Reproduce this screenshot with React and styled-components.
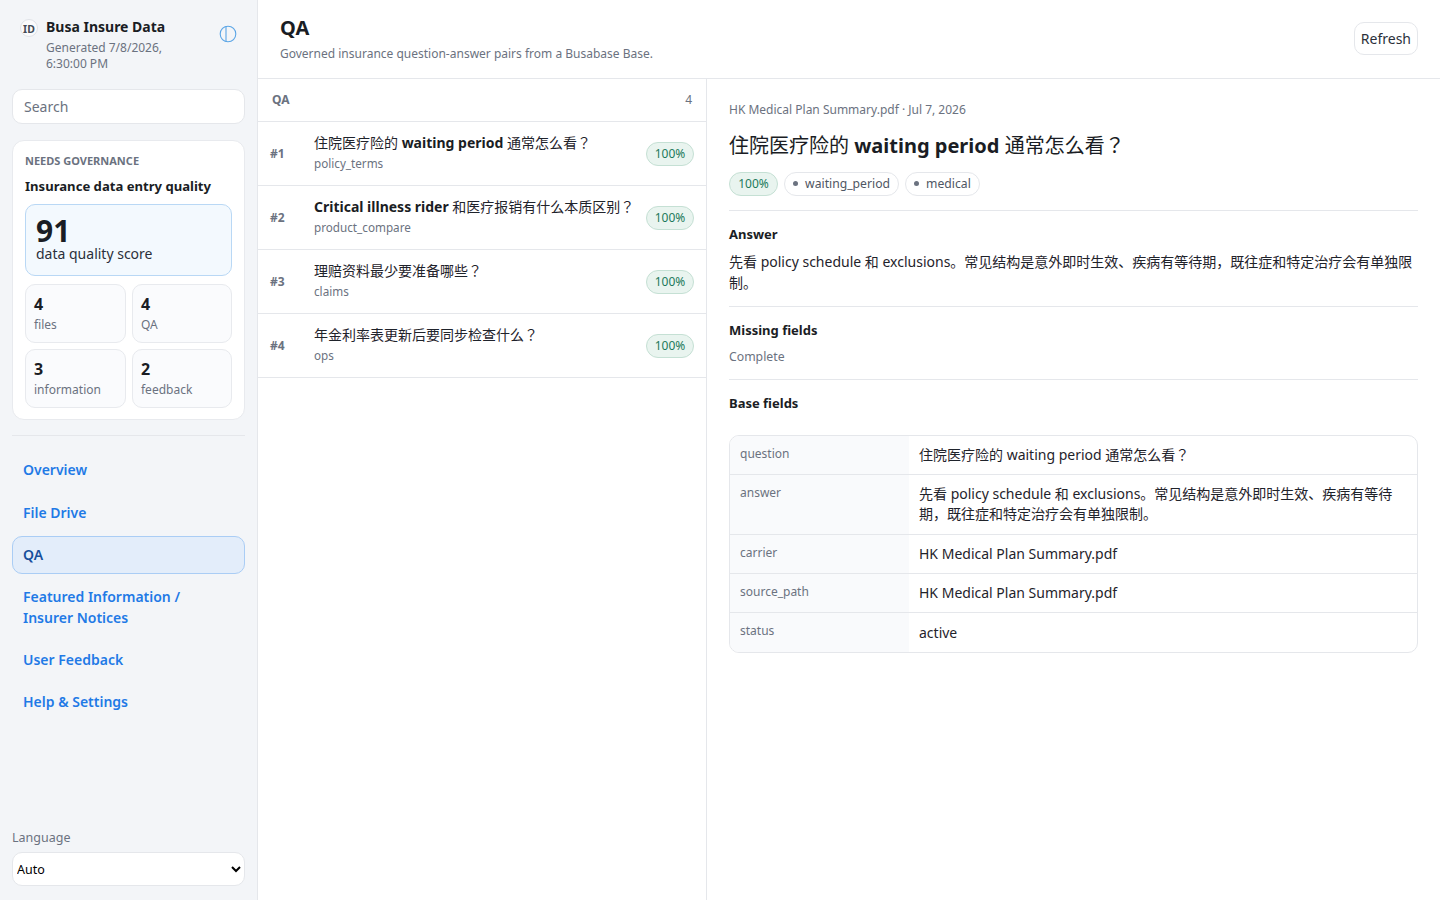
import React from 'react';
import styled, { createGlobalStyle } from 'styled-components';

const FONT = '"Noto Sans", "Noto Sans CJK JP", sans-serif';

const Global = createGlobalStyle`
  * { box-sizing: border-box; }
  html, body { margin: 0; height: 100%; }
  body {
    font-family: ${FONT};
    color: #1a1d24;
    background: #fff;
    overflow: hidden;
  }
`;

const Shell = styled.div`
  display: grid;
  grid-template-columns: 258px 1fr;
  height: 900px;
`;

const Sidebar = styled.aside`
  display: flex;
  flex-direction: column;
  background: #f3f5f8;
  border-right: 1px solid #e5e7eb;
  padding: 17px 12px 14px;
`;

const Brand = styled.div`
  display: flex;
  align-items: flex-start;
  padding: 0 8px 0 8px;
  height: 72px;
`;

const BrandBadge = styled.div`
  flex: none;
  width: 18px;
  height: 18px;
  margin-top: 2px;
  padding-top: 1px;
  border-radius: 50%;
  border: 1px solid #e0e3e8;
  background: #fbfbfc;
  display: flex;
  align-items: center;
  justify-content: center;
  font-size: 10.5px;
  font-weight: 700;
  color: #444b57;
`;

const BrandText = styled.div`
  flex: 1;
  margin-left: 8px;
`;

const BrandName = styled.div`
  font-size: 14px;
  font-weight: 700;
  line-height: 20px;
`;

const BrandMeta = styled.div`
  width: 130px;
  margin-top: 3px;
  font-size: 12px;
  line-height: 16px;
  color: #6b7280;
`;

const PanelToggle = styled.div`
  flex: none;
  margin: 8px 0 0 0;
  display: flex;
  color: #5aa5e6;
`;

const Search = styled.input`
  width: 100%;
  height: 35px;
  flex: none;
  border: 1px solid #e5e7eb;
  border-radius: 10px;
  background: #fff;
  padding: 0 11px;
  font: 400 14px ${FONT};
  outline: none;
  &::placeholder { color: #6b7280; opacity: 1; }
`;

const GovCard = styled.section`
  flex: none;
  margin-top: 16px;
  height: 280px;
  padding: 12px;
  background: #fff;
  border: 1px solid #e8eaee;
  border-radius: 12px;
`;

const GovEyebrow = styled.div`
  font-size: 11px;
  font-weight: 700;
  line-height: 16px;
  color: #6b7280;
`;

const GovTitle = styled.div`
  margin-top: 8px;
  font-size: 13.1px;
  font-weight: 700;
  line-height: 18px;
`;

const ScoreBox = styled.div`
  margin-top: 9px;
  height: 72px;
  padding: 12px 10px 0;
  border: 1px solid #b9d8f5;
  border-radius: 10px;
  background: #f3f9fe;
`;

const ScoreValue = styled.div`
  font-size: 30px;
  font-weight: 700;
  line-height: 28px;
`;

const ScoreLabel = styled.div`
  font-size: 14px;
  line-height: 18px;
  color: #2b303a;
`;

const StatGrid = styled.div`
  margin-top: 8px;
  display: grid;
  grid-template-columns: 100.8px 1fr;
  grid-auto-rows: 58.5px;
  gap: 6.5px 6.2px;
`;

const StatBox = styled.div`
  padding: 8px;
  border: 1px solid #e8eaee;
  border-radius: 10px;
  background: #fafbfd;
`;

const StatValue = styled.div`
  font-size: 16px;
  font-weight: 700;
  line-height: 22px;
`;

const StatLabel = styled.div`
  margin-top: 1px;
  font-size: 12px;
  line-height: 18px;
  color: #6b7280;
`;

const Divider = styled.hr`
  flex: none;
  width: 100%;
  margin: 15px 0 15.2px;
  border: 0;
  border-top: 1px solid #e5e7eb;
`;

const Nav = styled.nav`
  display: flex;
  flex-direction: column;
  gap: 4px;
`;

const NavItem = styled.a`
  display: block;
  padding: 7.2px 40px 8px 10px;
  border: 1px solid ${p => (p.$active ? '#aacdf5' : 'transparent')};
  border-radius: 10px;
  background: ${p => (p.$active ? '#e3edfa' : 'transparent')};
  color: ${p => (p.$active ? '#174f9c' : '#1f7ae6')};
  font-size: 14px;
  font-weight: 600;
  line-height: 21px;
`;

const LangBlock = styled.div`
  margin-top: auto;
`;

const LangLabel = styled.label`
  display: block;
  font-size: 12.5px;
  line-height: 18px;
  color: #6b7280;
  margin-bottom: 5px;
`;

const LangSelect = styled.select`
  width: 100%;
  height: 34px;
  border: 1px solid #e5e7eb;
  border-radius: 10px;
  background: #fff;
  padding: 0;
  font: 400 12.5px ${FONT};
  color: #000;
`;

const Main = styled.main`
  display: flex;
  flex-direction: column;
  min-width: 0;
`;

const Header = styled.header`
  flex: none;
  height: 79px;
  display: flex;
  align-items: flex-start;
  justify-content: space-between;
  padding: 14px 22px;
  border-bottom: 1px solid #e5e7eb;
`;

const PageTitle = styled.h1`
  margin: 0;
  font-size: 20px;
  font-weight: 700;
  line-height: 28px;
`;

const PageSub = styled.p`
  margin: 3px 0 0;
  font-size: 12px;
  line-height: 18px;
  color: #6b7280;
`;

const RefreshButton = styled.button`
  margin-top: 8px;
  height: 33px;
  padding: 0 6px;
  border: 1px solid #e5e7eb;
  border-radius: 10px;
  background: #fff;
  font: 400 14px ${FONT};
  color: #2b303a;
`;

const Columns = styled.div`
  flex: 1;
  display: grid;
  grid-template-columns: 449px 1fr;
  min-height: 0;
`;

const ListPane = styled.div`
  border-right: 1px solid #e5e7eb;
`;

const ListHead = styled.div`
  height: 43px;
  display: flex;
  align-items: center;
  justify-content: space-between;
  padding: 0 14px 1px;
  border-bottom: 1px solid #e5e7eb;
  font-size: 12px;
  color: #6b7280;
`;

const ListHeadTitle = styled.span`
  font-weight: 700;
`;

const QaRow = styled.div`
  height: 64px;
  display: flex;
  align-items: center;
  padding: 0 12px;
  border-bottom: 1px solid #e5e7eb;
`;

const QaIndex = styled.div`
  flex: none;
  width: 44px;
  font-size: 12px;
  font-weight: 700;
  color: #6b7280;
`;

const QaBody = styled.div`
  flex: 1;
  min-width: 0;
  margin-top: -2px;
`;

const QaQuestion = styled.div`
  font-size: 14px;
  line-height: 20px;
  white-space: nowrap;
  color: #1f232b;
  b { font-weight: 700; color: #1a1d24; }
`;

const QaTopic = styled.div`
  margin-top: 2px;
  font-size: 11.7px;
  line-height: 17px;
  color: #6b7280;
`;

const ScorePill = styled.span`
  flex: none;
  display: inline-flex;
  align-items: center;
  height: 24px;
  padding: 0 ${p => (p.$wide ? '8.25px' : '7.75px')};
  border: 1px solid #c5e0d4;
  border-radius: 999px;
  background: #e9f4ef;
  color: #1d7a5c;
  font-size: 12px;
`;

const Detail = styled.div`
  padding: 22px;
  min-width: 0;
`;

const DetailMeta = styled.div`
  font-size: 12px;
  line-height: 18px;
  color: #6b7280;
`;

const DetailTitle = styled.h2`
  margin: 13px 0 0;
  font-size: 20px;
  font-weight: 400;
  line-height: 28px;
  b { font-weight: 700; }
`;

const Chips = styled.div`
  display: flex;
  gap: 6px;
  margin-top: 11.5px;
  padding-bottom: 1px;
`;

const Chip = styled.span`
  display: inline-flex;
  align-items: center;
  gap: 7px;
  height: 24px;
  padding: 0 8px;
  border: 1px solid #e5e7eb;
  border-radius: 999px;
  color: #4f5663;
  font-size: 12.2px;
  &::before {
    content: '';
    width: 5px;
    height: 5px;
    border-radius: 50%;
    background: #6b7280;
  }
`;

const Section = styled.section`
  margin-top: 13px;
  padding-top: 14px;
  border-top: 1px solid #e5e7eb;
`;

const SectionTitle = styled.h3`
  margin: 0;
  font-size: 13px;
  font-weight: 700;
  line-height: 18px;
`;

const AnswerText = styled.p`
  margin: 8px 0 0;
  font-size: 14px;
  line-height: 21px;
  color: #1f232b;
`;

const CompleteText = styled.p`
  margin: 8px 0 0;
  font-size: 12.25px;
  line-height: 19px;
  color: #6b7280;
`;

const FieldTable = styled.div`
  margin-top: 23.4px;
  border: 1px solid #e5e7eb;
  border-radius: 10px;
  overflow: hidden;
`;

const FieldRow = styled.div`
  display: grid;
  grid-template-columns: 179px 1fr;
  &:not(:last-child) { border-bottom: 1px solid #e5e7eb; }
`;

const FieldKey = styled.div`
  padding: 8px 10px;
  background: #f9fafc;
  font-size: 12px;
  line-height: 20px;
  color: #6b7280;
`;

const FieldValue = styled.div`
  padding: 9.2px 10px;
  font-size: 14px;
  line-height: 20px;
  color: #1f232b;
`;

const STATS = [
  ['4', 'files'],
  ['4', 'QA'],
  ['3', 'information'],
  ['2', 'feedback'],
];

const NAV = [
  ['Overview'],
  ['File Drive'],
  ['QA', true],
  ['Featured Information / Insurer Notices'],
  ['User Feedback'],
  ['Help & Settings'],
];

const QA_ROWS = [
  { n: '#1', q: <>住院医疗险的 <b>waiting period</b> 通常怎么看？</>, topic: 'policy_terms' },
  { n: '#2', q: <><b>Critical illness rider</b> 和医疗报销有什么本质区别？</>, topic: 'product_compare' },
  { n: '#3', q: '理赔资料最少要准备哪些？', topic: 'claims' },
  { n: '#4', q: '年金利率表更新后要同步检查什么？', topic: 'ops' },
];

const FIELDS = [
  ['question', '住院医疗险的 waiting period 通常怎么看？'],
  ['answer', '先看 policy schedule 和 exclusions。常见结构是意外即时生效、疾病有等待期，既往症和特定治疗会有单独限制。'],
  ['carrier', 'HK Medical Plan Summary.pdf'],
  ['source_path', 'HK Medical Plan Summary.pdf'],
  ['status', 'active'],
];

export default function App() {
  return (
    <>
      <Global />
      <Shell>
        <Sidebar>
          <Brand>
            <BrandBadge>ID</BrandBadge>
            <BrandText>
              <BrandName>Busa Insure Data</BrandName>
              <BrandMeta>Generated 7/8/2026, 6:30:00 PM</BrandMeta>
            </BrandText>
            <PanelToggle>
              <svg width="18" height="18" viewBox="0 0 18 18" fill="none" stroke="currentColor" strokeWidth="1.1">
                <circle cx="9" cy="9" r="7.8" />
                <path d="M7 1.5v15" />
              </svg>
            </PanelToggle>
          </Brand>
          <Search placeholder="Search" />
          <GovCard>
            <GovEyebrow>NEEDS GOVERNANCE</GovEyebrow>
            <GovTitle>Insurance data entry quality</GovTitle>
            <ScoreBox>
              <ScoreValue>91</ScoreValue>
              <ScoreLabel>data quality score</ScoreLabel>
            </ScoreBox>
            <StatGrid>
              {STATS.map(([value, label]) => (
                <StatBox key={label}>
                  <StatValue>{value}</StatValue>
                  <StatLabel>{label}</StatLabel>
                </StatBox>
              ))}
            </StatGrid>
          </GovCard>
          <Divider />
          <Nav>
            {NAV.map(([label, active]) => (
              <NavItem key={label} $active={active}>{label}</NavItem>
            ))}
          </Nav>
          <LangBlock>
            <LangLabel>Language</LangLabel>
            <LangSelect defaultValue="Auto">
              <option>Auto</option>
            </LangSelect>
          </LangBlock>
        </Sidebar>
        <Main>
          <Header>
            <div>
              <PageTitle>QA</PageTitle>
              <PageSub>Governed insurance question-answer pairs from a Busabase Base.</PageSub>
            </div>
            <RefreshButton>Refresh</RefreshButton>
          </Header>
          <Columns>
            <ListPane>
              <ListHead>
                <ListHeadTitle>QA</ListHeadTitle>
                <span>4</span>
              </ListHead>
              {QA_ROWS.map(row => (
                <QaRow key={row.n}>
                  <QaIndex>{row.n}</QaIndex>
                  <QaBody>
                    <QaQuestion>{row.q}</QaQuestion>
                    <QaTopic>{row.topic}</QaTopic>
                  </QaBody>
                  <ScorePill>100%</ScorePill>
                </QaRow>
              ))}
            </ListPane>
            <Detail>
              <DetailMeta>HK Medical Plan Summary.pdf · Jul 7, 2026</DetailMeta>
              <DetailTitle>住院医疗险的 <b>waiting period</b> 通常怎么看？</DetailTitle>
              <Chips>
                <ScorePill $wide>100%</ScorePill>
                <Chip>waiting_period</Chip>
                <Chip>medical</Chip>
              </Chips>
              <Section>
                <SectionTitle>Answer</SectionTitle>
                <AnswerText>先看 policy schedule 和 exclusions。常见结构是意外即时生效、疾病有等待期，既往症和特定治疗会有单独限制。</AnswerText>
              </Section>
              <Section>
                <SectionTitle>Missing fields</SectionTitle>
                <CompleteText>Complete</CompleteText>
              </Section>
              <Section>
                <SectionTitle>Base fields</SectionTitle>
                <FieldTable>
                  {FIELDS.map(([key, value]) => (
                    <FieldRow key={key}>
                      <FieldKey>{key}</FieldKey>
                      <FieldValue>{value}</FieldValue>
                    </FieldRow>
                  ))}
                </FieldTable>
              </Section>
            </Detail>
          </Columns>
        </Main>
      </Shell>
    </>
  );
}
